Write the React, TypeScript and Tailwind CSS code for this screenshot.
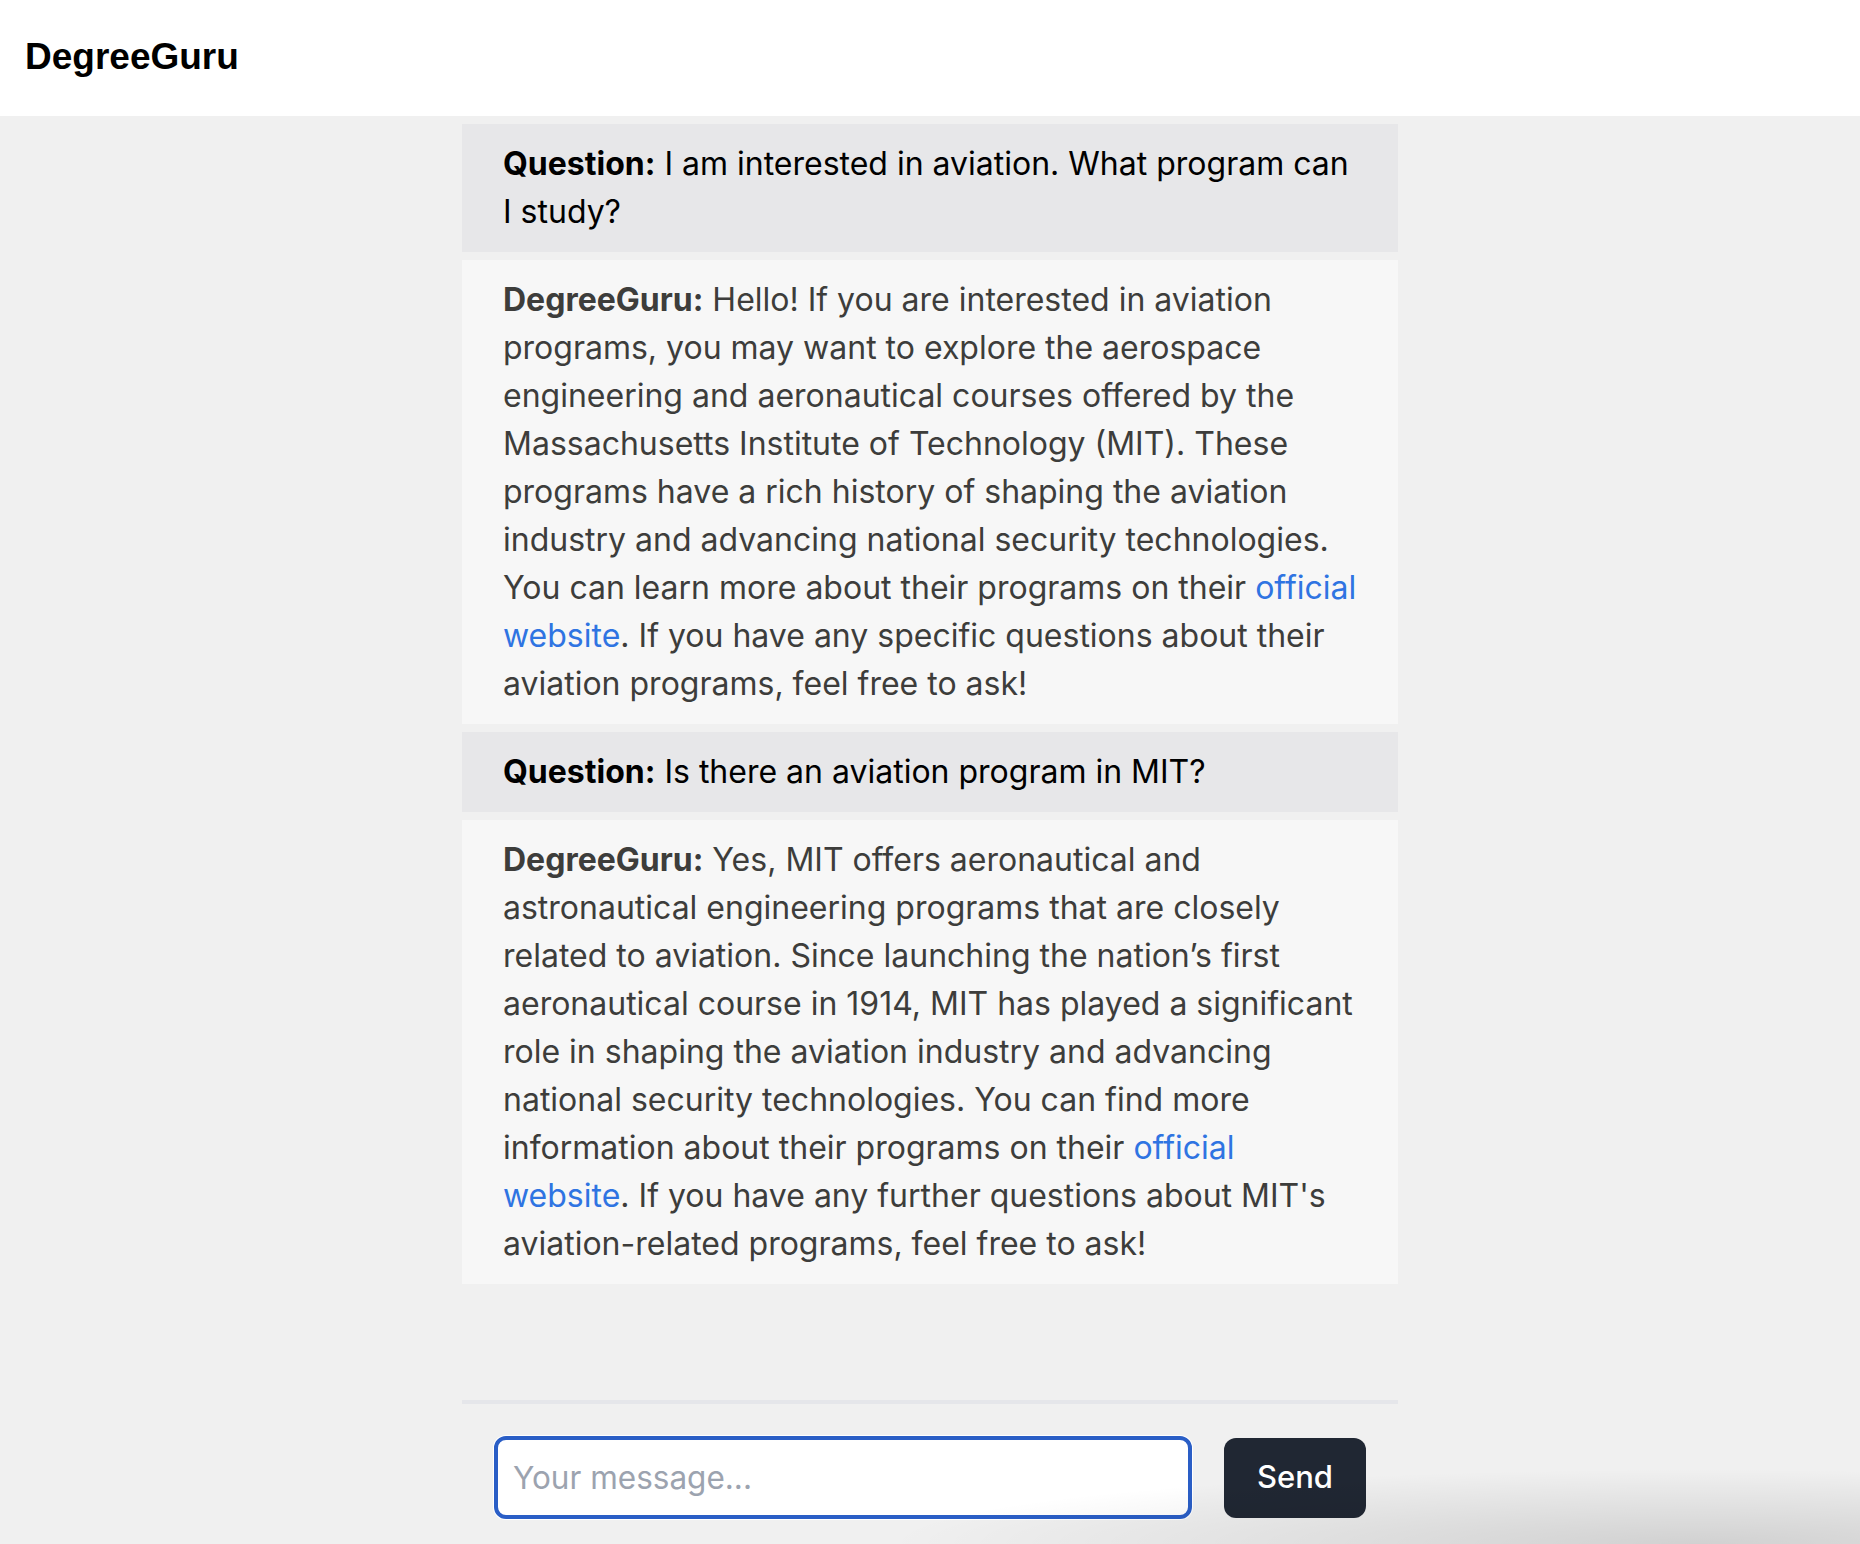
const messages = [
  {
    role: 'question',
    text: 'I am interested in aviation. What program can I study?',
  },
  {
    role: 'answer',
    parts: [
      'Hello! If you are interested in aviation programs, you may want to explore the aerospace engineering and aeronautical courses offered by the Massachusetts Institute of Technology (MIT). These programs have a rich history of shaping the aviation industry and advancing national security technologies. You can learn more about their programs on their ',
      'official website',
      '. If you have any specific questions about their aviation programs, feel free to ask!',
    ],
  },
  {
    role: 'question',
    text: 'Is there an aviation program in MIT?',
  },
  {
    role: 'answer',
    parts: [
      'Yes, MIT offers aeronautical and astronautical engineering programs that are closely related to aviation. Since launching the nation\u2019s first aeronautical course in 1914, MIT has played a significant role in shaping the aviation industry and advancing national security technologies. You can find more information about their programs on their ',
      'official website',
      ". If you have any further questions about MIT's aviation-related programs, feel free to ask!",
    ],
  },
];

export default function App() {
  return (
    <div className="relative flex flex-col h-screen w-full bg-[#f0f0f0] font-['Inter',sans-serif] overflow-hidden">
      {/* Header */}
      <header className="flex items-center h-[116px] shrink-0 bg-white pl-[25px] pb-[2px]">
        <h1 className="text-[37px] font-bold text-black font-['Liberation_Sans',Arial,sans-serif]">DegreeGuru</h1>
      </header>

      {/* Chat column */}
      <main className="flex flex-col flex-1 w-[936px] mx-auto min-h-0">
        <div className="flex flex-col gap-2 pt-2 flex-1">
          {messages.map((msg, idx) =>
            msg.role === 'question' ? (
              <div key={idx} className="bg-[#e7e7e9] px-[41px] py-4 text-[32px] leading-[48px] text-black">
                <span className="font-bold">Question:</span> {msg.text}
              </div>
            ) : (
              <div key={idx} className="bg-[#f7f7f7] px-[41px] py-4 text-[32px] leading-[48px] text-[#3d3d3b]">
                <span className="font-bold">DegreeGuru:</span> {msg.parts![0]}
                <a href="#" className="text-[#2f74e2]">
                  {msg.parts![1]}
                </a>
                {msg.parts![2]}
              </div>
            )
          )}
        </div>

        {/* Input bar */}
        <div className="flex items-center gap-8 border-t-4 border-[#e5e6ea] px-8 pt-8 pb-[25px]">
          <input
            type="text"
            placeholder="Your message..."
            className="flex-1 h-[83px] rounded-[12px] border-4 border-[#2a5ec6] bg-white px-[15px] text-[31.5px] text-black placeholder:text-[#9ca3af] outline-none ring-1 ring-white"
          />
          <button className="w-[142px] h-[80px] rounded-[12px] bg-[#202733] text-white text-[31px] font-medium">
            Send
          </button>
        </div>
      </main>

      {/* soft shadow at the bottom edge */}
      <div className="pointer-events-none absolute bottom-0 right-0 w-[58%] h-[100px] bg-[radial-gradient(ellipse_100%_100%_at_85%_100%,rgba(0,0,0,0.13),transparent_75%)]" />
    </div>
  );
}
